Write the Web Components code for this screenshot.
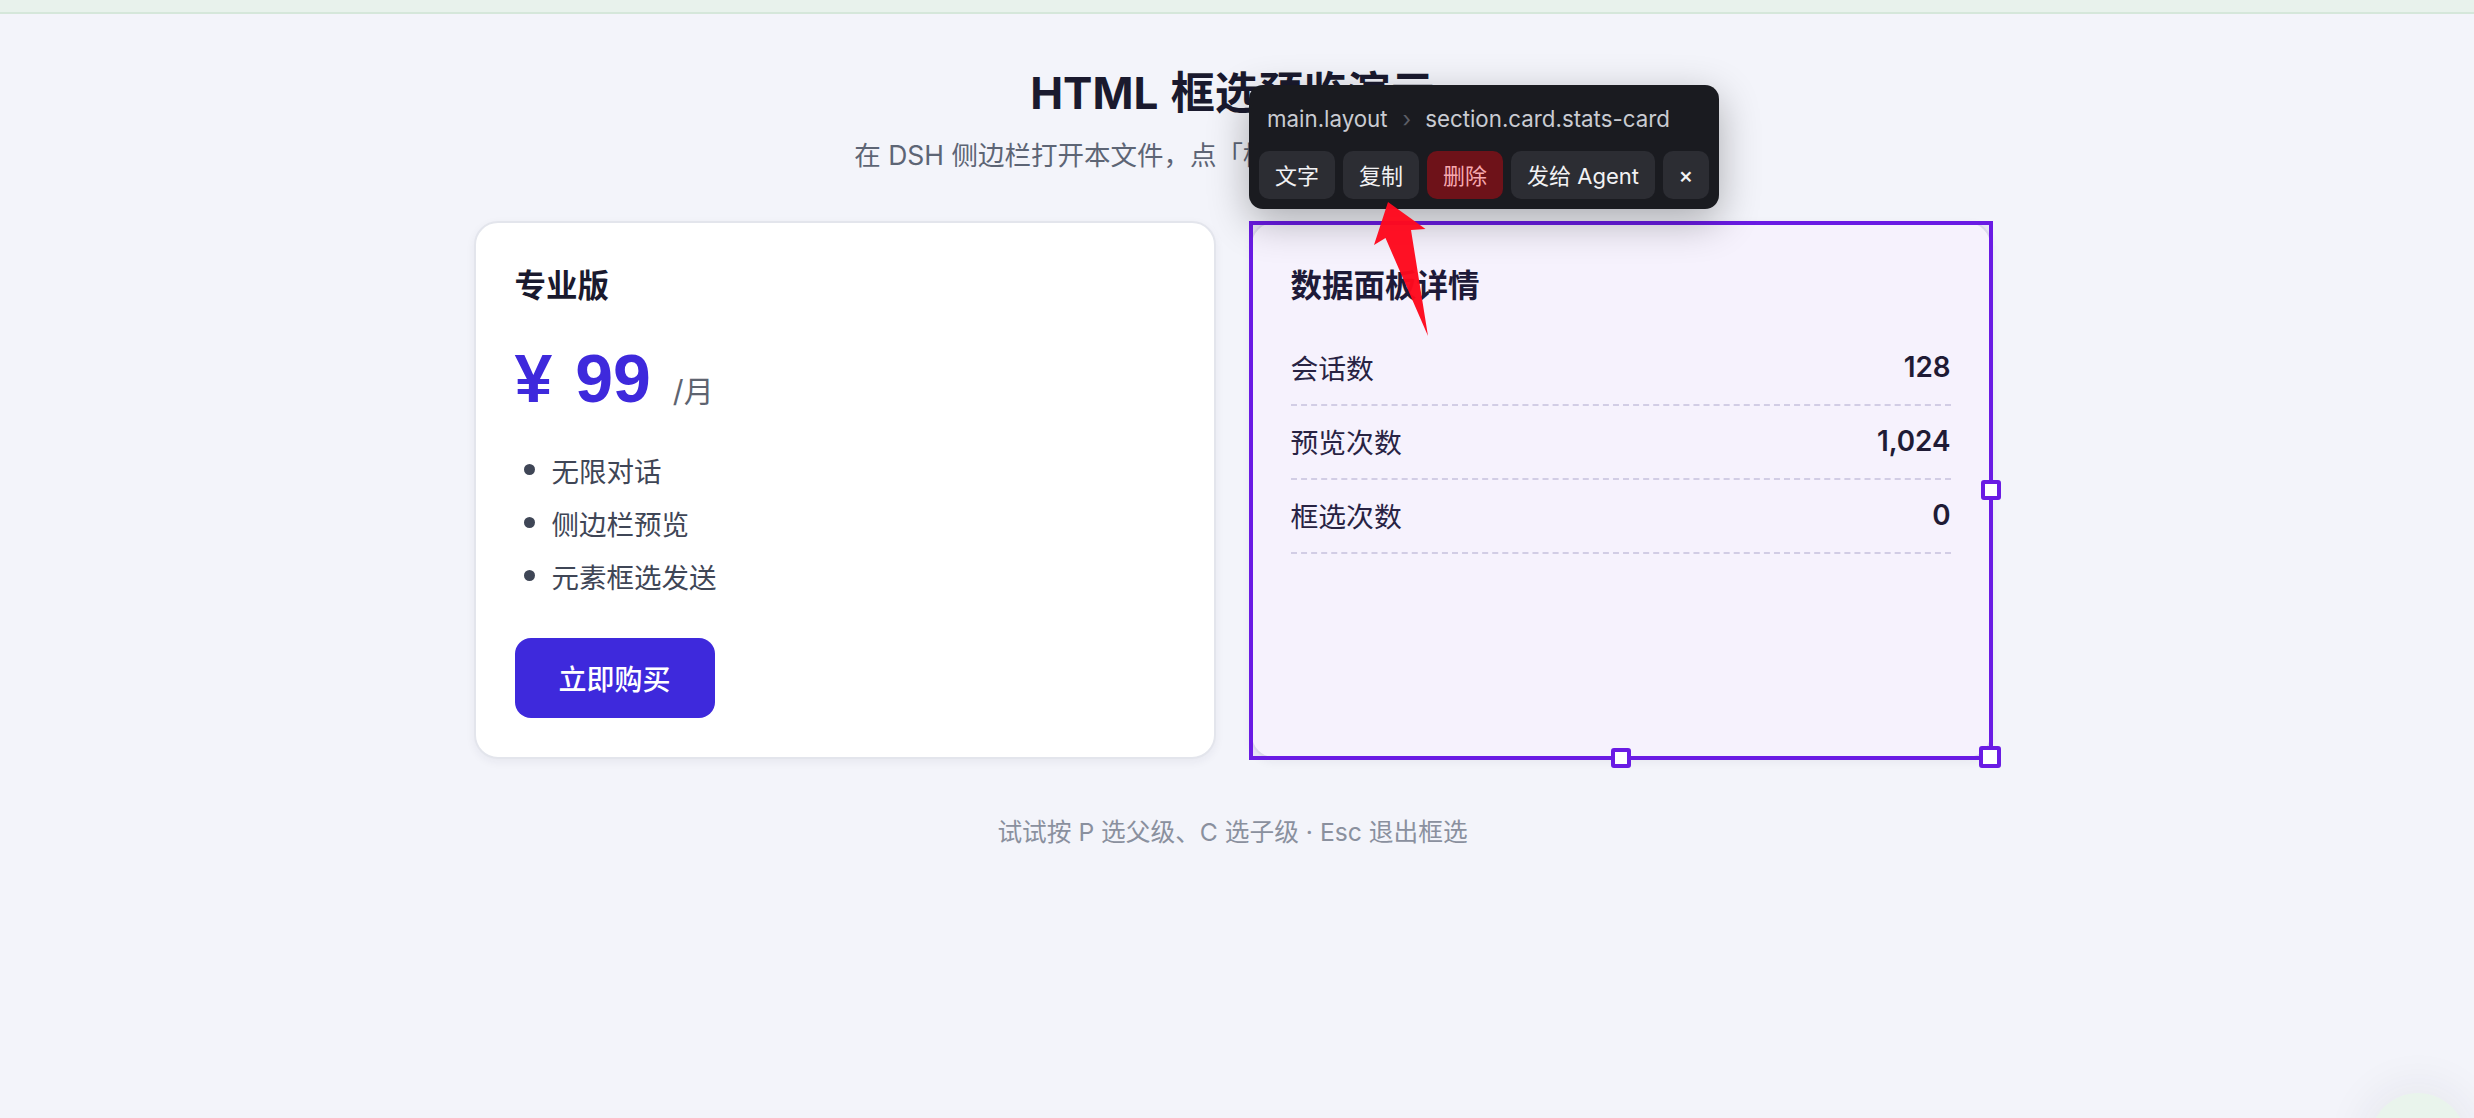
<!DOCTYPE html>
<html lang="zh">
<head>
<meta charset="utf-8">
<title>HTML 框选预览演示</title>
<style>
  html, body { margin: 0; height: 100%; overflow: hidden; }
  body {
    background: #f3f4fa;
    font-family: Inter, "Noto Sans CJK SC", sans-serif;
    color: #1a1a2e;
  }
  .cards {
    display: grid;
    grid-template-columns: 742px 742px;
    gap: 34px;
    justify-content: center;
  }
</style>
</head>
<body>
<top-strip></top-strip>
<demo-layout>
  <span slot="title">HTML 框选预览演示</span>
  <span slot="sub">在 DSH 侧边栏打开本文件，点「框选」，然后点击页面中的元素</span>
  <div class="cards" slot="cards">
    <price-card></price-card>
    <stats-card></stats-card>
  </div>
  <span slot="hint">试试按 P 选父级、C 选子级 · Esc 退出框选</span>
</demo-layout>
<select-frame></select-frame>
<select-toolbar></select-toolbar>
<red-arrow></red-arrow>
<corner-blob></corner-blob>

<script>
class TopStrip extends HTMLElement {
  constructor() {
    super();
    this.attachShadow({ mode: 'open' }).innerHTML = `
    <style>
      :host { display: block; height: 12px; background: #e8f2ec; border-bottom: 2px solid #d5e7da; }
    </style>`;
  }
}
customElements.define('top-strip', TopStrip);

class DemoLayout extends HTMLElement {
  constructor() {
    super();
    this.attachShadow({ mode: 'open' }).innerHTML = `
    <style>
      :host { display: block; padding-right: 9px; text-align: center; }
      h1 { margin: 0; padding-top: 53px; font-size: 44px; line-height: 52px; font-weight: 700; word-spacing: 2px; color: #1a1a2e; }
      p { margin: 0; }
      .sub { margin-top: 18px; padding-right: 10px; font-size: 26.5px; line-height: 36px; color: #5d6575; }
      .grid { margin-top: 48px; text-align: left; }
      .hint { margin-top: 55px; font-size: 24.7px; line-height: 36px; color: #8a909e; }
    </style>
    <h1><slot name="title"></slot></h1>
    <p class="sub"><slot name="sub"></slot></p>
    <div class="grid"><slot name="cards"></slot></div>
    <p class="hint"><slot name="hint"></slot></p>`;
  }
}
customElements.define('demo-layout', DemoLayout);

const cardBase = `
  :host {
    display: block;
    box-sizing: border-box;
    height: 538px;
    padding: 41px 39px 0;
    background: #fff;
    border: 2px solid #e3e5ec;
    border-radius: 24px;
    box-shadow: 0 3px 10px rgba(30, 30, 60, .06);
  }
  h2 { margin: 0; font-size: 31.5px; line-height: 44px; font-weight: 700; color: #1a1a2e; }
`;

class PriceCard extends HTMLElement {
  constructor() {
    super();
    this.attachShadow({ mode: 'open' }).innerHTML = `
    <style>
      ${cardBase}
      .price { display: flex; align-items: baseline; margin-top: 30px; height: 80px; line-height: 80px; }
      .num { font: 700 68px/80px "Liberation Sans", sans-serif; word-spacing: 4px; color: #3e29dc; }
      .per { margin-left: 22px; font-size: 30px; color: #5e6470; }
      ul { margin: 25px 0 0; padding: 0; list-style: none; }
      li { display: flex; align-items: center; height: 53px; padding-left: 37px; font-size: 27.5px; color: #3f4656; position: relative; }
      li::before { content: ""; position: absolute; left: 9px; top: 21px; width: 11px; height: 11px; border-radius: 50%; background: #3f4656; }
      button {
        display: block; width: 200px; height: 80px; margin-top: 36px; padding: 0;
        border: 0; border-radius: 16px; background: #3e29dc; color: #fff;
        font: 500 28px Inter, "Noto Sans CJK SC", sans-serif;
      }
    </style>
    <h2>专业版</h2>
    <div class="price"><span class="num">¥ 99</span><span class="per">/月</span></div>
    <ul><li>无限对话</li><li>侧边栏预览</li><li>元素框选发送</li></ul>
    <button>立即购买</button>`;
  }
}
customElements.define('price-card', PriceCard);

class StatRow extends HTMLElement {
  constructor() {
    super();
    this.attachShadow({ mode: 'open' }).innerHTML = `
    <style>
      :host {
        display: flex; justify-content: space-between; align-items: center;
        box-sizing: border-box; height: 74px; padding-bottom: 3px; border-bottom: 2px dashed #d9d8e6;
        font-size: 27.8px; color: #25243a;
      }
      .v { font-weight: 600; color: #1b1b2b; }
    </style>
    <span><slot></slot></span><span class="v">${this.getAttribute('value')}</span>`;
  }
}
customElements.define('stat-row', StatRow);

class StatsCard extends HTMLElement {
  constructor() {
    super();
    this.attachShadow({ mode: 'open' }).innerHTML = `
    <style>
      ${cardBase}
      .rows { margin-top: 24px; }
    </style>
    <h2>数据面板详情</h2>
    <div class="rows">
      <stat-row value="128">会话数</stat-row>
      <stat-row value="1,024">预览次数</stat-row>
      <stat-row value="0">框选次数</stat-row>
    </div>`;
  }
}
customElements.define('stats-card', StatsCard);

/* overlays: these sit on top of the page, so absolute is fine */
class SelectFrame extends HTMLElement {
  constructor() {
    super();
    this.attachShadow({ mode: 'open' }).innerHTML = `
    <style>
      :host {
        position: absolute; left: 1249px; top: 221px; width: 744px; height: 539px;
        box-sizing: border-box; border: 4px solid #6a1be4; background: rgba(106, 27, 228, .06);
      }
      i { position: absolute; box-sizing: border-box; background: #fff; border: 4px solid #6a1be4; border-radius: 3px; }
      .e { width: 20px; height: 20px; left: 728px; top: 255px; }
      .s { width: 20px; height: 20px; left: 358px; top: 523px; }
      .c { width: 22px; height: 22px; left: 726px; top: 521px; }
    </style>
    <i class="e"></i><i class="s"></i><i class="c"></i>`;
  }
}
customElements.define('select-frame', SelectFrame);

class SelectToolbar extends HTMLElement {
  constructor() {
    super();
    this.attachShadow({ mode: 'open' }).innerHTML = `
    <style>
      :host {
        position: absolute; left: 1249px; top: 85px; width: 470px; height: 124px;
        box-sizing: border-box; padding: 0 10px;
        background: #1a1b20; border-radius: 14px;
        box-shadow: 0 12px 40px rgba(0, 0, 0, .3);
        font-family: Inter, "Noto Sans CJK SC", sans-serif;
      }
      .crumbs { display: flex; align-items: center; height: 66px; padding-left: 8px; font-size: 22.3px; color: #c9cbd2; }
      .crumbs b { font-weight: 400; color: #5c5e66; margin: 0 14px 0 15px; }
      .btns { display: flex; gap: 8px; }
      button {
        height: 48px; padding: 0 16px 2px; border: 0; border-radius: 10px;
        background: #2c2d33; color: #f2f2f4;
        font: 400 22px Inter, "Noto Sans CJK SC", sans-serif;
        white-space: nowrap;
      }
      button.del { background: #6e1219; color: #f7a9b0; }
      button.x { width: 46px; padding: 0; font-weight: 500; }
    </style>
    <div class="crumbs"><span>main.layout</span><b>›</b><span>section.card.stats-card</span></div>
    <div class="btns">
      <button>文字</button><button>复制</button><button class="del">删除</button><button>发给 Agent</button><button class="x">×</button>
    </div>`;
  }
}
customElements.define('select-toolbar', SelectToolbar);

class RedArrow extends HTMLElement {
  constructor() {
    super();
    this.attachShadow({ mode: 'open' }).innerHTML = `
    <style>
      :host { position: absolute; left: 1370px; top: 200px; width: 60px; height: 140px; opacity: .97; }
      svg { display: block; }
    </style>
    <svg width="60" height="140" viewBox="1370 200 60 140">
      <polygon fill="#ff0a1e" points="1388,202 1425.5,229 1411,230 1428,336 1385.5,238 1374,245"/>
    </svg>`;
  }
}
customElements.define('red-arrow', RedArrow);

class CornerBlob extends HTMLElement {
  constructor() {
    super();
    this.attachShadow({ mode: 'open' }).innerHTML = `
    <style>
      :host {
        position: fixed; left: 2370px; top: 1093px; width: 96px; height: 96px;
        border-radius: 50%; background: #e9f4ec;
        box-shadow: 0 0 40px 12px rgba(30, 30, 60, .05);
      }
    </style>`;
  }
}
customElements.define('corner-blob', CornerBlob);
</script>
</body>
</html>
